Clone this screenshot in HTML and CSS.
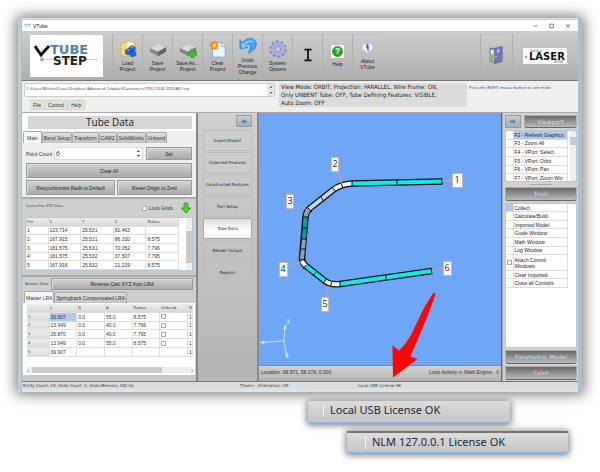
FILE: index.html
```
<!DOCTYPE html>
<html lang="en">
<head>
<meta charset="utf-8">
<title>VTube</title>
<link rel="stylesheet" href="styles.css">
</head>
<body>
<main class="page">
<section class="window">
  <header class="titlebar">
    <svg class="app-icon" viewBox="0 0 12 8"><path d="M1 1h4v2H1zM6 1h5v2H6zM2 4h2v3H2zM6 4h5v1H6zM6 6h5v1H6z" fill="#79c8df"/></svg>
    <h1>VTube</h1>
    <svg class="win-buttons" viewBox="0 0 48 12" fill="none" stroke="#555" stroke-width=".8"><path d="M4 6.500h4M21.500 4.500h4v4h-4zM39.500 4.500l4 4M43.500 4.500l-4 4"/></svg>
  </header>

  <div class="toolbar">
    <svg class="logo" viewBox="0 0 73 42">
      <rect width="73" height="42" fill="#fff"/>
      <path d="M14 24.500h54" stroke="#aab4bd" stroke-width=".6"/>
      <path d="M12 14v11" stroke="#999" stroke-width=".6"/><circle cx="12" cy="24.500" r="2" fill="#aaa"/>
      <path d="M5 11l6 9 8-9" fill="none" stroke="#111" stroke-width="2.800"/>
      <text x="20" y="19" class="logo-blue">TUBE</text>
      <text x="23" y="30" class="logo-black">STEP</text>
    </svg>
    <div class="tools">
      <button class="tool"><svg viewBox="0 0 20 20"><path d="M2 4l7-2 2 2 7-2v14l-9 3-7-2z" fill="#f7d872" stroke="#c9a63a" stroke-width=".6"/><path d="M9 3l6-1v12H9z" fill="#fff8d5"/><path d="M7 11l4-2 3 2v4l-4 2-3-2zM11 8l3-2 4 2v4l-4 1zM12 14l4-2 3 2v3l-4 2-3-2z" fill="#2269c9" stroke="#164b9b" stroke-width=".5"/><path d="M8 11l3-1 2 1-3 1zM12 8l2-1 3 1-3 1z" fill="#69a9f2"/></svg>Load<br>Project</button>
      <button class="tool"><svg viewBox="0 0 20 20"><path d="M1 9l10-5 8 4v5l-9 5-9-5z" fill="#858585"/><path d="M1 9l10-5 8 4-9 5z" fill="#d8d8d8"/><path d="M10 13l9-5v5l-9 5z" fill="#666"/></svg>Save<br>Project</button>
      <button class="tool"><svg viewBox="0 0 20 20"><path d="M1 9l10-5 8 4v5l-9 5-9-5z" fill="#858585"/><path d="M1 9l10-5 8 4-9 5z" fill="#d8d8d8"/><path d="M13 10h4v3h3v4h-3v3h-4v-3h-3v-4h3z" fill="#39bd28" stroke="#238b19" stroke-width=".5"/></svg>Save As...<br>Project</button>
      <button class="tool"><svg viewBox="0 0 20 20"><path d="M4 3h10l4 4v12H4z" fill="#eef7ff" stroke="#75a8db"/><path d="M14 3v4h4" fill="#fff" stroke="#75a8db"/><path d="M6 1v10M1 6h10M2 2l8 8M10 2l-8 8" stroke="#f15d28" stroke-width="1"/><circle cx="6" cy="6" r="4" fill="#ff7d26"/><circle cx="6" cy="6" r="2.500" fill="#ffd33f"/></svg>Clear<br>Project</button>
      <button class="tool"><svg viewBox="0 0 20 20"><path d="M1 3v10l9-1-3-3c5-3 8 1 3 9 9-3 11-10 8-14-4-4-10-3-14 2z" fill="#43a2ef" stroke="#237bc9" stroke-width=".7"/><path d="M3 6l2 2c4-6 11-5 12-1-4-3-8-1-10 2l1 2-5 1z" fill="#8dccff"/></svg>Undo<br>Previous<br>Change</button>
      <button class="tool"><svg viewBox="0 0 20 20"><circle cx="10" cy="10" r="8" fill="none" stroke="#7e82bd" stroke-width="3" stroke-dasharray="3 2.030"/><circle cx="10" cy="10" r="5.500" fill="none" stroke="#a9acdc" stroke-width="5"/><circle cx="10" cy="10" r="3" fill="#c9c9d8" stroke="#7e82bd" stroke-width=".7"/></svg>System<br>Options</button>
      <button class="tool" aria-label="Info"><svg viewBox="0 0 20 20"><path d="M6 3h8v2h-3v10h3v2H6v-2h3V5H6z" fill="#111"/></svg></button>
      <button class="tool"><svg class="small" viewBox="0 0 14 14"><rect width="14" height="14" rx="1" fill="#f7f7f7"/><circle cx="7" cy="7" r="5.500" fill="#28a51f" stroke="#157b12" stroke-width=".6"/><text x="7" y="10" class="icon-mark">?</text></svg>Help</button>
      <button class="tool"><svg class="small" viewBox="0 0 14 14"><path d="M7 1c8 0 8 9 1 9v3l-4-3C-1 9 0 1 7 1z" fill="#eef1ff" stroke="#a6aee0" stroke-width=".7"/><circle cx="7" cy="3" r="1.200" fill="#1c61cc"/><path d="M5.500 5H7.500v4" fill="none" stroke="#1c61cc" stroke-width="1.700"/></svg>About<br>VTube</button>
    </div>
    <button class="tool door" aria-label="Exit"><svg viewBox="0 0 20 20"><path d="M3 2h12v16H3z" fill="#73758d"/><path d="M4 4h6v13H4z" fill="#d9eaf0"/><path d="M4 9h3v8H4z" fill="#91b84c"/><path d="M8 3l9-3v17l-9 3z" fill="#7375bb" stroke="#555798" stroke-width=".5"/><path d="M11 4l3-1v4l-3 1z" fill="#b9badf"/><circle cx="10" cy="12" r=".8" fill="#ddd"/></svg></button>
    <button class="laser" aria-label="Switch to laser mode"><svg viewBox="0 0 44 16"><rect width="44" height="16" fill="#fff"/><text x="7" y="4" class="laser-small">Switch to</text><text x="6" y="12" class="laser-big">LASER</text><text x="31" y="15" class="laser-small">MODE</text><circle cx="3" cy="9" r="1.500" fill="#aaa"/></svg></button>
  </div>

  <div class="info">
    <div class="info-left">
      <div class="path"><input aria-label="Project file" value="C:\Users\MichaelCone\Dropbox (Advanced Tubular)\Customers\TPS\12582-2002A01.vtp" readonly><span class="spin"><i>▴</i><i>▾</i></span></div>
      <nav class="menu"><button>File</button><button>Control</button><button>Help</button></nav>
    </div>
    <p class="mode">View Mode: ORBIT, Projection: PARALLEL, Wire Frame: ON,<br>Only UNBENT Tube: OFF, Tube Defining Features: VISIBLE,<br>Auto Zoom: OFF</p>
    <p class="hint">Press the RIGHT mouse button to exit mode</p>
  </div>

  <div class="work">
    <section class="data">
      <div class="data-title"><h2>Tube Data</h2></div>
      <div class="tabs"><button class="active">Main</button><button>Bend Setup</button><button>Transform</button><button>CAM2</button><button>SolidWorks</button><button>Unbend</button></div>
      <div class="form">
        <div class="count"><label for="points">Point Count</label><div class="number"><input id="points" value="6"><svg viewBox="0 0 4 10"><path d="M0 3l2-2 2 2zM0 7h4L2 9z" fill="#222"/></svg></div><button class="btn">Set</button></div>
        <button class="btn">Clear All</button>
        <div class="pair"><button class="btn">Resynchronize Radii to Default</button><button class="btn">Reset Origin to Zero</button></div>
      </div>
      <div class="group">
        <div class="group-head"><span class="caption">Centerline XYZ Data</span><label class="lock"><input type="checkbox"> Lock Grids</label><button class="down" aria-label="Calculate down"><svg viewBox="0 0 12 12"><path d="M4 1h4v5h3l-5 5-5-5h3z" fill="#56cf2d" stroke="#2b9618" stroke-width=".8"/></svg></button></div>
        <div class="gridbox xyz">
          <table>
            <tr><th>Pnt</th><th>X</th><th>Y</th><th>Z</th><th>Radius</th></tr>
            <tr><td>1</td><td>123.714</td><td>25.531</td><td>82.463</td><td></td></tr>
            <tr><td>2</td><td>167.915</td><td>25.531</td><td>86.330</td><td>8.575</td></tr>
            <tr><td>3</td><td>181.575</td><td>25.531</td><td>70.052</td><td>7.796</td></tr>
            <tr><td>4</td><td>181.575</td><td>25.532</td><td>37.507</td><td>7.795</td></tr>
            <tr><td>5</td><td>167.916</td><td>25.532</td><td>21.229</td><td>8.575</td></tr>
          </table>
          <div class="vscroll low"></div>
        </div>
      </div>
      <div class="group">
        <div class="bender"><span class="caption">Bender Data</span><button class="btn">Reverse Calc XYZ from LRA</button></div>
        <div class="tabs sub"><button class="active">Master LRA</button><button>Springback Compensated LRA</button></div>
        <div class="lra-frame">
          <table class="lra">
            <tr><th></th><th>L</th><th>R</th><th>A</th><th>Radius</th><th>Unbend</th><th>Ri</th></tr>
            <tr><th>1</th><td class="sel">39.907</td><td>0.0</td><td>55.0</td><td>8.575</td><td><input type="checkbox" aria-label="Unbend 1"></td><td>1</td></tr>
            <tr><th>2</th><td>13.949</td><td>0.0</td><td>40.0</td><td>7.796</td><td><input type="checkbox" aria-label="Unbend 2"></td><td>1</td></tr>
            <tr><th>3</th><td>26.870</td><td>0.0</td><td>40.0</td><td>7.795</td><td><input type="checkbox" aria-label="Unbend 3"></td><td>1</td></tr>
            <tr><th>4</th><td>13.949</td><td>0.0</td><td>55.0</td><td>8.575</td><td><input type="checkbox" aria-label="Unbend 4"></td><td>1</td></tr>
            <tr><th>5</th><td>39.907</td><td></td><td></td><td></td><td></td><td>1</td></tr>
          </table>
          <div class="hscroll"><span>‹</span><b></b><span>›</span></div>
        </div>
      </div>
    </section>

    <nav class="side">
      <button class="arrow" aria-label="Collapse"><svg viewBox="0 0 8 6"><path d="M0 3l4-3v1.500h4v3H4V6z" fill="#2f8de0"/></svg></button>
      <button>Import/Export</button><button>Collected Features</button><button>Constructed Features</button><button>Part Setup</button><button class="current">Tube Data</button><button>Bender Output</button><button>Reports</button>
    </nav>

    <section class="viewport">
      <svg class="scene" viewBox="259 113 242 252" preserveAspectRatio="xMinYMin meet">
        <g fill="none" stroke="#111" stroke-width="6.500" stroke-linejoin="round">
          <path d="M442.500 181.500L352 183.500Q341 184 333 190L309 209Q306 212 305.500 217L302 258Q302 263 306 266L325 281Q330 285 340 284L432 271"/>
        </g>
        <g fill="none" stroke-width="4">
          <path d="M441.500 181.500L352 183.500M306 266L325 281M340 284L431 271" stroke="#12ece8"/>
          <path d="M352 183.500Q341 184 333 190M325 281Q330 285 340 284M302 261Q303 264 306 266" stroke="#fafafa"/>
          <path d="M333 190L309 209" stroke="#c5d8ef"/>
          <path d="M309 209Q306 212 305.500 217M304 239L302 258V261" stroke="#93a0b3"/>
          <path d="M305.500 217L304 239" stroke="#139b91"/>
        </g>
        <path d="M397 180v5M352 181v5M341 183l2 5M333 188l3 4M321 197l3 5M308 208l4 4M303 217h5M303 228h4M302 239h5M301 249h5M300 260l5-1M306 265l-3 4M316 272l-3 4M326 279l-3 5M332 282l-2 5M340 281v5M386 275v5" stroke="#111" stroke-width="1"/>
        <path d="M442 181h11M338 171l4 13M296 204l11 6M288 266l14-4M326 296l3-10M432 271l11-3" stroke="#d0a38f" stroke-width="1"/>
        <g fill="#fff" stroke="#c9b7b2" stroke-width="1"><path d="M452.500 173.500h10v14h-10zM331.500 157.500h7v14h-7zM286.500 194.500h7v14h-7zM279.500 262.500h8v14h-8zM321.500 297.500h7v14h-7zM443.500 261.500h8v14h-8z"/></g>
        <g class="tag"><text x="457" y="183">1</text><text x="335" y="167">2</text><text x="290" y="204">3</text><text x="283" y="272">4</text><text x="325" y="307">5</text><text x="447" y="271">6</text></g>
        <g fill="none" stroke="#dcecff" stroke-width=".8"><path d="M284 341l1-15M284 341l-24 1.500M284 341l3 17M283.500 329l1.500-4 1.500 4zM264 341l-4 1.500 4 1.500zM285.500 354l2 4 .5-5zM287 320h3l-3 3h3"/></g>
      </svg>
      <footer class="location"><span>Location: 98.971, 58.179, 0.000</span><span>Loop Activity in Math Engine:&nbsp; 0</span></footer>
    </section>

    <aside class="right">
      <div class="vp-head"><button class="arrow" aria-label="Expand"><svg viewBox="0 0 8 6"><path d="M8 3L4 0v1.500H0v3h4V6z" fill="#2f8de0"/></svg></button><h3 class="bar">Viewport</h3></div>
      <div class="gridbox">
        <table class="list">
          <tr class="picked"><td></td><td>F2 - Refresh Graphics</td></tr><tr><td></td><td>F3 - Zoom All</td></tr><tr><td></td><td>F4 - VPort: Select</td></tr><tr><td></td><td>F5 - VPort: Orbit</td></tr><tr><td></td><td>F6 - VPort: Pan</td></tr><tr><td></td><td>F7 - VPort: Zoom Win</td></tr>
        </table>
        <div class="vscroll"></div>
      </div>
      <div class="splitter"></div>
      <h3 class="bar">Tools</h3>
      <div class="toolbox">
        <table class="list toollist">
          <tr class="first"><td></td><td>Collect</td></tr><tr><td></td><td>Calculate/Build</td></tr><tr><td></td><td>Imported Model</td></tr><tr><td></td><td>Guide Window</td></tr><tr><td></td><td>Math Window</td></tr><tr><td></td><td>Log Window</td></tr><tr class="double"><td><input type="checkbox" aria-label="Attach control windows"></td><td>Attach Control<br>Windows</td></tr><tr><td></td><td>Clear Imported</td></tr><tr><td></td><td>Close all Controls</td></tr>
        </table>
      </div>
      <h3 class="bar">Parametric Model</h3>
      <h3 class="bar">Color</h3>
    </aside>
  </div>
  <footer class="status"><span>Entity Count: 24, Undo Count: 2, Undo Memory: 342 kb</span><span>Timers - Orientation: Off</span><span>Local USB License OK</span></footer>
</section>
<div class="callouts">
  <div class="callout">Local USB License OK</div>
  <div class="callout second">NLM 127.0.0.1 License OK</div>
</div>
<svg class="red-arrow" viewBox="390 290 50 90"><path d="M432.500 294Q434 292 435.500 294.500L428 315 410.500 356.500 417.500 359 393 377.500 392.500 345.500 399 350.500Q406 344 412 333L424 308z" fill="#fb0505"/></svg>
</main>
</body>
</html>
```
FILE: styles.css
```
* { box-sizing: border-box; }
body { margin: 0; background: #fff; color: #333; font: 5px/6px "Liberation Sans", sans-serif; }
button, input { font: inherit; color: inherit; margin: 0; padding: 0; border: 0; background: none; }
h1, h2, h3, p { margin: 0; font-weight: normal; }
svg { display: block; flex: none; }
table { border-collapse: collapse; table-layout: fixed; }
th { font-weight: normal; text-align: left; }
input[type=checkbox] { appearance: none; width: 5px; height: 5px; background: #fff; border: 1px solid #aaa; display: block; }

.page { position: relative; padding: 18px 18px 19px; }
.window { padding: 1px 4px 3px; background: linear-gradient(90deg, #c4ccd3 0 3px, #9ec1dd 3px 4px, #dce3e9 4px calc(100% - 4px), #9ec1dd calc(100% - 4px) calc(100% - 3px), #bbb calc(100% - 3px)); box-shadow: 0 0 13px 2px #777; }
.titlebar { display: flex; align-items: center; height: 12px; padding: 0 2px; background: #fff; color: #111; gap: 2px; border-top: 1px solid #b9d7ee; }
.titlebar h1 { font-size: 5px; line-height: 6px; }
.app-icon { width: 7px; height: 5px; }
.win-buttons { width: 48px; height: 11px; margin-left: auto; }

.toolbar { display: flex; align-items: center; height: 50px; padding: 0 2px 0 8px; background: linear-gradient(#cdcdcd, #afafaf); border-bottom: 1px solid #777; }
.logo { width: 73px; height: 42px; margin-right: 9px; }
.logo-blue { font: bold 13px "DejaVu Sans", sans-serif; fill: #537fb8; }
.logo-black { font: bold 12px "DejaVu Sans", sans-serif; fill: #222; }
.tools { display: flex; }
.tool { display: flex; flex-direction: column; align-items: center; justify-content: center; width: 30px; height: 43px; text-align: center; border-left: 1px solid #b0b0b0; border-top: 1px solid #c1c1c1; color: #222; }
.tool svg { width: 18px; height: 18px; margin-bottom: 2px; }
.tool svg.small { width: 13px; height: 13px; margin-bottom: 3px; }
.icon-mark { font: bold 9px "Liberation Sans", sans-serif; fill: #fff; text-anchor: middle; }
.door { margin-left: auto; margin-right: 2px; }
.laser { display: flex; width: 64px; height: 43px; justify-content: center; align-items: center; border-left: 1px solid #b0b0b0; }
.laser svg { width: 44px; height: 16px; }
.laser-small { font: 3px "Liberation Sans", sans-serif; fill: #555; }
.laser-big { font: bold 10px "DejaVu Sans", sans-serif; fill: #111; }

.info { display: flex; height: 31px; padding: 2px 2px 0; background: #efefef; }
.info-left { width: 251px; margin-right: 4px; }
.path { display: flex; height: 14px; border: 1px solid #ccc; border-radius: 2px; background: #fff; font: 4px/6px "Open Sans", sans-serif; }
.path input { flex: 1; height: 8px; padding-left: 1px; }
.spin { display: flex; flex-direction: column; width: 7px; background: #e5e5e5; text-align: center; }
.spin i { font-style: normal; line-height: 6px; }
.menu { display: flex; width: max-content; margin: 3px 0 0 6px; background: #e2e2d8; }
.menu button { height: 10px; padding: 0 3px; border: 1px solid #d4d4ca; border-left-width: 0; }
.mode { width: 188px; height: 24px; padding: 0 2px; background: #dcdcdc; font: 6px/8px "DejaVu Sans Condensed", "DejaVu Sans", sans-serif; color: #222; white-space: nowrap; }
.hint { padding: 2px; font: 4px/5px "Open Sans", sans-serif; white-space: nowrap; }

.work { display: flex; background: #c6c6c6; border-top: 1px solid #aaa; }
.data { width: 176px; padding-bottom: 4px; background: #c8c8c8; border-right: 2px solid #888; }
.data-title { padding: 3px 4px 2px 6px; background: #fff; }
.data-title h2 { height: 13px; background: #d7d7d7; text-align: center; font: 10px/13px "Open Sans", sans-serif; color: #222; }
.tabs { display: flex; height: 12px; padding-left: 1px; background: #efefef; align-items: flex-end; }
.tabs button { height: 11px; padding: 0 1px; border: 1px solid #aaa; border-bottom: 0; border-radius: 2px 2px 0 0; background: linear-gradient(#ddd, #c3c3c3); white-space: nowrap; }
.tabs .active { height: 12px; padding: 0 3px; background: #f8f8f8; }
.form { display: flex; flex-direction: column; gap: 2px; padding: 3px 4px 2px; background: #efefef; }
.btn { height: 15px; flex: 1 0 auto; border: 1px solid #999; background: linear-gradient(#d4d4d4, #a9a9a9); box-shadow: inset 1px 1px #ddd; text-align: center; white-space: nowrap; color: #222; }
.count { display: flex; align-items: center; gap: 1px; height: 15px; }
.count label { width: 27px; font-size: 5px; }
.count .btn { flex: 1; height: 13px; margin-left: 2px; }
.number { display: flex; align-items: center; width: 89px; height: 13px; padding: 0 2px 0 1px; background: #fff; border: 1px solid #ddd; }
.number input { flex: 1; min-width: 0; font: 7px/9px "Open Sans", sans-serif; }
.number svg { width: 3px; height: 9px; }
.pair { display: flex; gap: 2px; }
.pair .btn { flex: 6; }
.pair .btn + .btn { flex: 5; }
.group { padding: 0 3px; border-top: 2px solid #aaa; background: #cfcfcf; }
.group + .group { margin-top: 4px; }
.caption { font: 4px/6px "Open Sans", sans-serif; }
.group-head { display: flex; height: 18px; padding: 0 1px; align-items: center; gap: 7px; }
.group-head .caption { margin-right: auto; align-self: flex-start; padding-top: 4px; }
.lock { display: flex; align-items: center; gap: 2px; }
.down svg { width: 12px; height: 12px; }
.gridbox { display: flex; justify-content: space-between; background: #fff; border: 1px solid #b5c8d8; }
.xyz { height: 54px; }
.xyz table { width: 153px; height: 52px; }
.xyz th:first-child { width: 22px; }
.gridbox td, .gridbox th, .lra td, .lra th { padding: 0 1px; border: 1px solid #dedede; border-width: 0 1px 1px 0; line-height: 6px; overflow: hidden; white-space: nowrap; }
.xyz th, .lra th { background: linear-gradient(#eee, #d8d8d2); font-family: "Open Sans", sans-serif; font-size: 4px; }
.vscroll { width: 6px; background: linear-gradient(#eee 0 6px, #ccc 6px 14px, #eee 14px); }
.vscroll.low { background: linear-gradient(#eee 0 13px, #ccc 13px 45px, #eee 45px); }
.bender { display: flex; align-items: center; gap: 3px; height: 13px; }
.bender .btn { height: 12px; }
.tabs.sub { margin: 1px -2px 0; background: #ccc; }
.tabs.sub button { padding: 0 1px; }
.lra-frame { margin: 0 -2px; padding: 1px 2px 2px 4px; height: 72px; background: #fff; }
.lra { width: 100%; height: 53px; }
.lra th:first-child { width: 22px; }
.lra tr:first-child th:last-child { width: 5px; }
.lra .sel { background: #b3c7e9; }
.hscroll { display: flex; align-items: center; justify-content: space-between; margin-top: 10px; height: 6px; background: #eee; }
.hscroll b { width: 130px; height: 6px; background: #ccc; margin-right: auto; margin-left: 3px; }

.side { display: flex; flex-direction: column; width: 61px; padding: 2px 5px; gap: 1px; background: linear-gradient(#d0d0d0, #b5b5b5); border-right: 2px solid #888; }
.side button { height: 21px; border: 1px solid #bdbdbd; white-space: nowrap; border-radius: 1px; font: 4px/6px "DejaVu Sans", sans-serif; color: #222; }
.side .current { background: linear-gradient(#ddd, #fff 60%, #eee); border-color: #aaa; }
.side .arrow { align-self: flex-end; height: 12px; margin-bottom: 2px; }
.arrow, .side .arrow { display: flex; width: 16px; align-items: center; justify-content: center; border: 1px solid #999; background: linear-gradient(#ccc, #aaa); }
.arrow svg { width: 6px; height: 5px; }

.viewport { flex: 1; min-width: 0; display: flex; flex-direction: column; background: #6fa6f5; border-right: 1px solid #666; }
.scene { flex: 1; width: 100%; min-height: 0; }
.tag { font: 9px "Open Sans", sans-serif; fill: #222; text-anchor: middle; }
.location { display: flex; justify-content: space-between; height: 16px; padding: 3px 2px; border-top: 1px solid #888; background: linear-gradient(#d2d2d2, #b3b3b3); }

.right { display: flex; flex-direction: column; width: 76px; padding: 2px 1px 1px 2px; gap: 2px; background: #d2d2d2; border-left: 1px solid #aaa; }
.vp-head { display: flex; gap: 3px; height: 13px; }
.vp-head .bar { flex: 1; height: 13px; }
.bar { height: 14px; flex: none; background: linear-gradient(#686868, #bbb); border: 1px solid #aaa; border-bottom: 1px solid #666; border-radius: 0 0 3px 3px; font: 6px/11px "DejaVu Sans", sans-serif; color: #eee; text-align: center; text-shadow: 0 0 1px #555; white-space: nowrap; }
.right .gridbox { height: 52px; overflow: hidden; }
.list { width: 62px; height: 52px; color: #222; }
.list td { border: 1px solid #dedede; border-width: 0 1px 1px 0; padding: 0 1px; line-height: 6px; white-space: nowrap; }
.list td:first-child { width: 7px; }
.picked td + td, .first td:first-child { background: #b3c7e9; }
.splitter { height: 1px; margin: 0 25px; background: #aaa; flex: none; }
.toolbox { flex: 1; background: #fff; border: 1px solid #b5c8d8; }
.toollist { height: 84px; }

.status { display: flex; height: 8px; padding: 0 1px; background: #dcdcdc; border-top: 1px solid #777; font: 4px/7px "DejaVu Sans", sans-serif; white-space: nowrap; }
.status span:nth-child(1) { width: 217px; }
.status span:nth-child(2) { width: 118px; }

.callouts { display: flex; flex-direction: column; margin-top: 9px; padding: 0 14px 0 290px; gap: 8px; }
.callout { width: 202px; height: 22px; padding: 1px 0 3px 15px; border-bottom: 1px solid #84baf0; background: linear-gradient(#dcdcdc, #c5c5c5); box-shadow: 0 1px 7px 1px #777; font: 11px/15px "Noto Sans", sans-serif; color: #202638; }
.callout::before { content: ""; display: inline-block; height: 12px; margin-right: 6px; vertical-align: middle; border-left: 1px solid #f5f5f5; }
.callout.second { align-self: flex-end; width: 221px; padding-left: 18px; border-top: 2px solid #777; }
.red-arrow { position: absolute; left: 390px; top: 290px; width: 50px; height: 90px; }
```
